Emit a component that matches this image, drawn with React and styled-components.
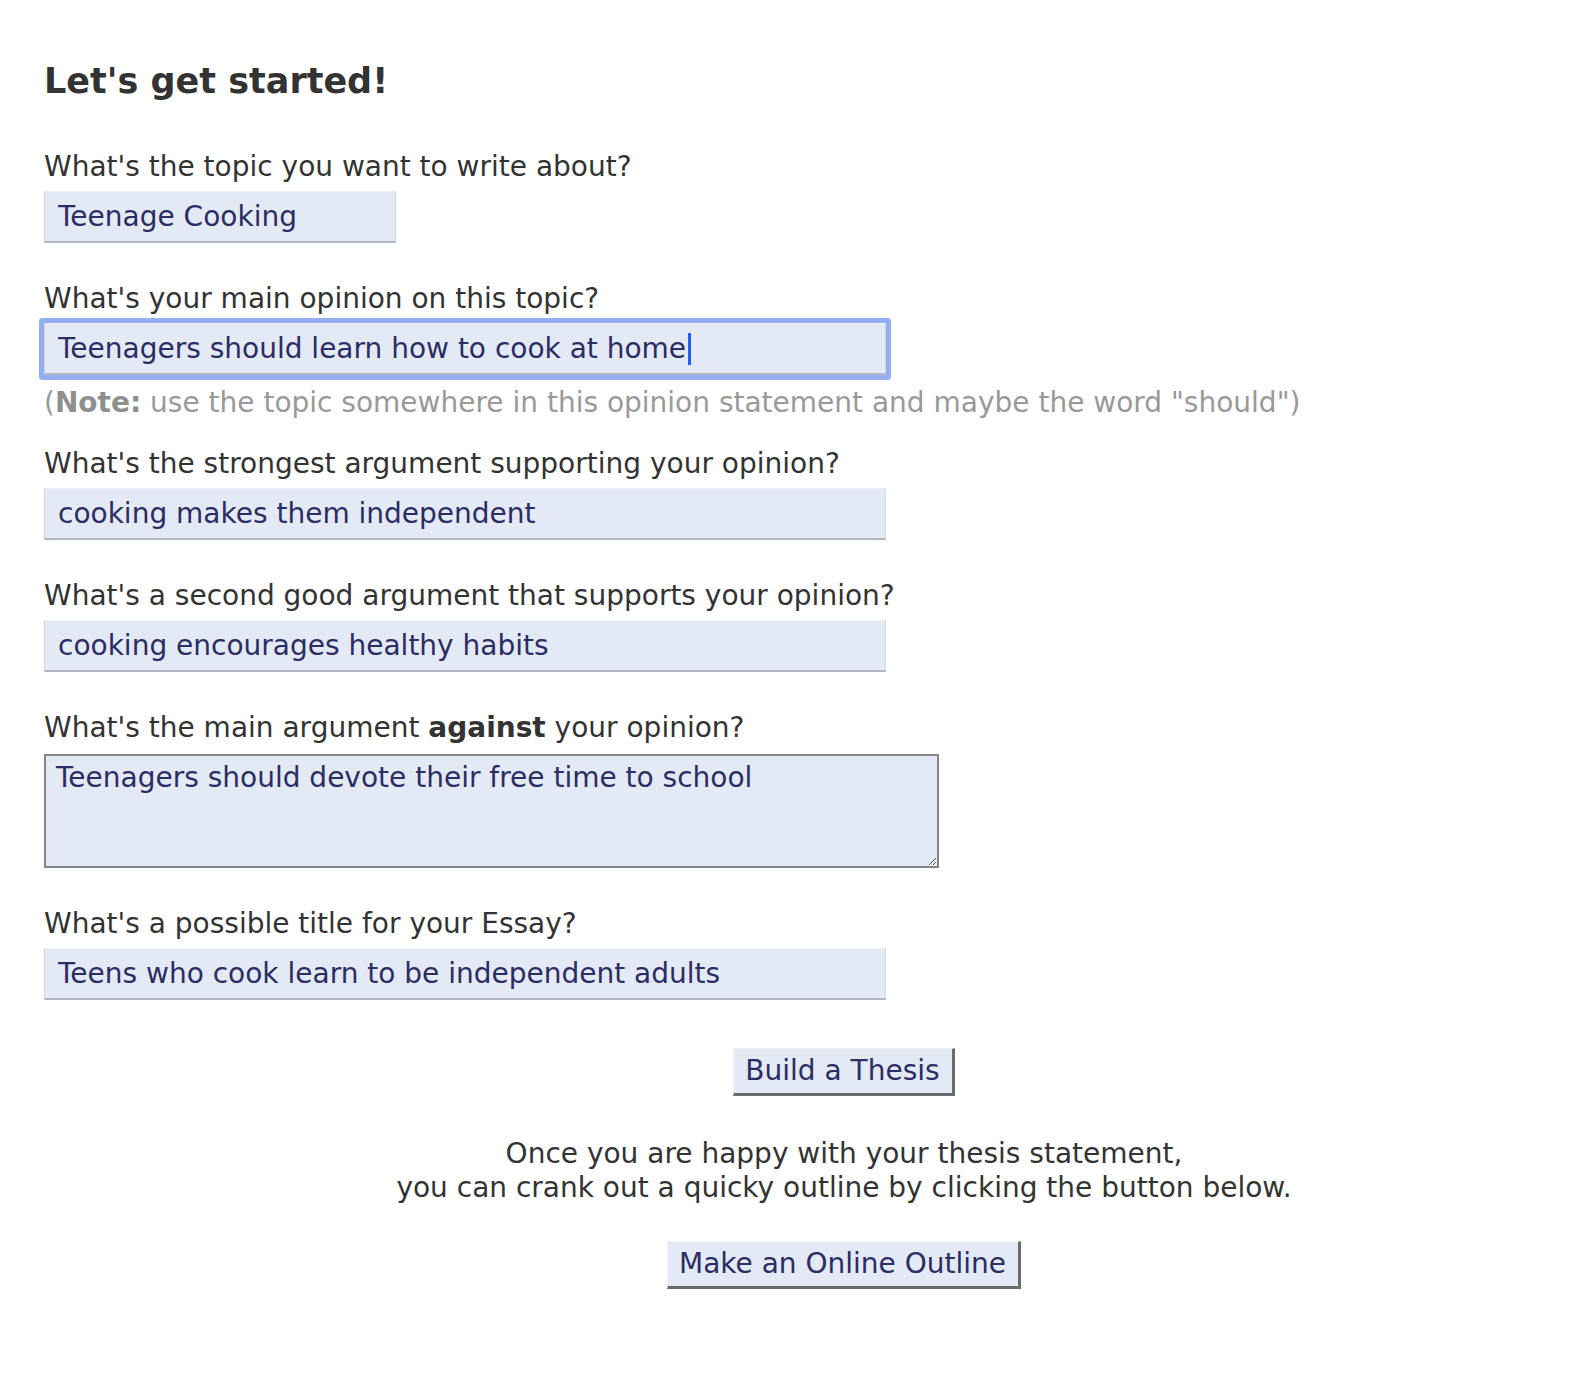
import React from 'react'
import styled, { createGlobalStyle } from 'styled-components'

const GlobalStyle = createGlobalStyle`
  html, body {
    margin: 0;
    padding: 0;
    background: #ffffff;
    overflow-x: hidden;
  }
  body {
    font-family: 'DejaVu Sans', Verdana, sans-serif;
    color: #333333;
  }
`

const Page = styled.div`
  padding: 61px 0 100px 44px;
`

const Form = styled.form`
  width: 1600px;
  margin: 0;
`

const Heading = styled.h2`
  margin: 0 0 49px 0;
  font-size: 35px;
  line-height: 40px;
  font-weight: bold;
  color: #333333;
`

const Field = styled.div`
  margin-bottom: ${(p) => p.gap ?? 39}px;
`

const Label = styled.label`
  display: block;
  font-size: 28px;
  line-height: 34px;
  color: #333333;
  margin-bottom: ${(p) => p.space ?? 7}px;
`

const InputWrap = styled.div`
  position: relative;
  width: ${(p) => p.width}px;
`

const TextInput = styled.input`
  display: block;
  box-sizing: border-box;
  width: 100%;
  height: 52px;
  margin: 0;
  padding: 0 13px;
  font-family: inherit;
  font-size: 28px;
  color: #2b2d63;
  background: #e4e9f6;
  border-style: solid;
  border-width: 1px 1px 2px 1px;
  border-color: #eef0f5 #d3d7e0 #b2b6c0 #d3d7e0;
  border-radius: ${(p) => (p.focused ? '1px' : '0')};
  box-shadow: ${(p) => (p.focused ? '0 0 0 5px #93aef2' : 'none')};
  outline: none;
`

const Caret = styled.span`
  position: absolute;
  left: 644px;
  top: 10px;
  width: 3px;
  height: 32px;
  background: #1f5dff;
`

const Note = styled.p`
  margin: 11px 0 27px 0;
  font-size: 28px;
  line-height: 34px;
  color: #999999;

  b {
    color: #8f8f8f;
  }
`

const TextArea = styled.textarea`
  display: block;
  box-sizing: border-box;
  width: 895px;
  height: 114px;
  margin: 0;
  padding: 5px 10px;
  font-family: inherit;
  font-size: 28px;
  line-height: 34px;
  color: #2b2d63;
  background: #e4e9f6;
  border: 2px solid #858585;
  border-radius: 0;
  outline: none;
`

const Actions = styled.div`
  text-align: center;
  padding-top: 48px;
`

const Button = styled.button`
  display: inline-block;
  box-sizing: border-box;
  margin: 0;
  padding: 5px 12px 5px 11px;
  font-family: inherit;
  font-size: 28px;
  line-height: 34px;
  color: #2b2d63;
  background: #e4e9f6;
  border-style: solid;
  border-width: 1px 3px 3px 1px;
  border-color: #f2f2f2 #6b6b6b #6b6b6b #f2f2f2;
  border-radius: 0;
  cursor: pointer;
`

const Blurb = styled.p`
  margin: 41px 0 36px 0;
  font-size: 28px;
  line-height: 34px;
  color: #333333;
`

export default function App() {
  return (
    <Page>
      <GlobalStyle />
      <Form onSubmit={(e) => e.preventDefault()}>
        <Heading>Let's get started!</Heading>

        <Field>
          <Label htmlFor="topic">What's the topic you want to write about?</Label>
          <InputWrap width={352}>
            <TextInput id="topic" type="text" defaultValue="Teenage Cooking" />
          </InputWrap>
        </Field>

        <Field gap={0}>
          <Label htmlFor="opinion">What's your main opinion on this topic?</Label>
          <InputWrap width={842}>
            <TextInput
              id="opinion"
              type="text"
              focused
              defaultValue="Teenagers should learn how to cook at home"
            />
            <Caret />
          </InputWrap>
        </Field>
        <Note>
          (<b>Note:</b> use the topic somewhere in this opinion statement and
          maybe the word "should")
        </Note>

        <Field>
          <Label htmlFor="arg1">What's the strongest argument supporting your opinion?</Label>
          <InputWrap width={842}>
            <TextInput id="arg1" type="text" defaultValue="cooking makes them independent" />
          </InputWrap>
        </Field>

        <Field>
          <Label htmlFor="arg2">What's a second good argument that supports your opinion?</Label>
          <InputWrap width={842}>
            <TextInput id="arg2" type="text" defaultValue="cooking encourages healthy habits" />
          </InputWrap>
        </Field>

        <Field gap={39}>
          <Label htmlFor="against" space={9}>
            What's the main argument <b>against</b> your opinion?
          </Label>
          <TextArea
            id="against"
            defaultValue="Teenagers should devote their free time to school"
          />
        </Field>

        <Field gap={0}>
          <Label htmlFor="title">What's a possible title for your Essay?</Label>
          <InputWrap width={842}>
            <TextInput
              id="title"
              type="text"
              defaultValue="Teens who cook learn to be independent adults"
            />
          </InputWrap>
        </Field>

        <Actions>
          <Button type="button">Build a Thesis</Button>
          <Blurb>
            Once you are happy with your thesis statement,
            <br />
            you can crank out a quicky outline by clicking the button below.
          </Blurb>
          <Button type="button">Make an Online Outline</Button>
        </Actions>
      </Form>
    </Page>
  )
}
